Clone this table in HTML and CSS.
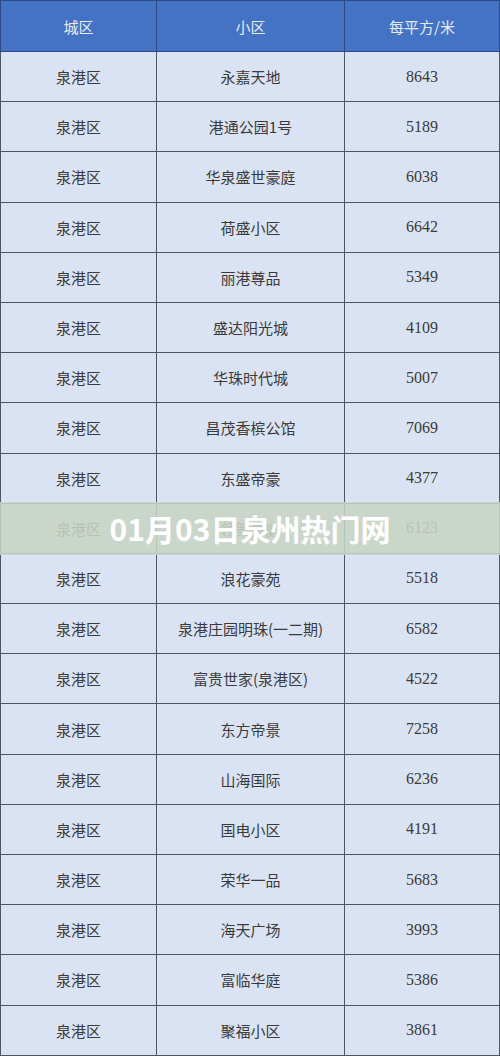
FILE: index.html
```html
<!DOCTYPE html>
<html lang="zh">
<head>
<meta charset="utf-8">
<link rel="stylesheet" href="styles.css">
</head>
<body>
<div class="page">
<table class="price-table">
<colgroup><col class="c1"><col class="c2"><col class="c3"></colgroup>
<thead>
<tr><th>城区</th><th>小区</th><th>每平方/米</th></tr>
</thead>
<tbody>
<tr><td>泉港区</td><td>永嘉天地</td><td class="num">8643</td></tr>
<tr><td>泉港区</td><td>港通公园1号</td><td class="num">5189</td></tr>
<tr><td>泉港区</td><td>华泉盛世豪庭</td><td class="num">6038</td></tr>
<tr><td>泉港区</td><td>荷盛小区</td><td class="num">6642</td></tr>
<tr><td>泉港区</td><td>丽港尊品</td><td class="num">5349</td></tr>
<tr><td>泉港区</td><td>盛达阳光城</td><td class="num">4109</td></tr>
<tr><td>泉港区</td><td>华珠时代城</td><td class="num">5007</td></tr>
<tr><td>泉港区</td><td>昌茂香槟公馆</td><td class="num">7069</td></tr>
<tr><td>泉港区</td><td>东盛帝豪</td><td class="num">4377</td></tr>
<tr><td>泉港区</td><td>领第豪庭</td><td class="num">6123</td></tr>
<tr><td>泉港区</td><td>浪花豪苑</td><td class="num">5518</td></tr>
<tr><td>泉港区</td><td>泉港庄园明珠(一二期)</td><td class="num">6582</td></tr>
<tr><td>泉港区</td><td>富贵世家(泉港区)</td><td class="num">4522</td></tr>
<tr><td>泉港区</td><td>东方帝景</td><td class="num">7258</td></tr>
<tr><td>泉港区</td><td>山海国际</td><td class="num">6236</td></tr>
<tr><td>泉港区</td><td>国电小区</td><td class="num">4191</td></tr>
<tr><td>泉港区</td><td>荣华一品</td><td class="num">5683</td></tr>
<tr><td>泉港区</td><td>海天广场</td><td class="num">3993</td></tr>
<tr><td>泉港区</td><td>富临华庭</td><td class="num">5386</td></tr>
<tr><td>泉港区</td><td>聚福小区</td><td class="num">3861</td></tr>
</tbody>
</table>
<div class="banner">01月03日泉州热门网</div>
</div>
</body>
</html>
```
FILE: styles.css
```css
html, body {
  margin: 0;
  padding: 0;
  background: #ffffff;
}
.page {
  position: relative;
  width: 500px;
  height: 1057px;
  overflow: hidden;
}
.price-table {
  width: 499px;
  border-collapse: collapse;
  table-layout: fixed;
  font-family: "Noto Sans CJK SC", "Liberation Serif", serif;
  font-size: 15px;
}
.c1 { width: 156px; }
.c2 { width: 188px; }
.c3 { width: 155px; }
.price-table th,
.price-table td {
  border: 1px solid #4d5566;
  text-align: center;
  vertical-align: middle;
  padding: 0;
}
.price-table th {
  background: #4472c4;
  color: #e6ecf8;
  font-weight: normal;
  height: 50px;
  border-color: #2f4a80;
}
.price-table td {
  background: #dae3f3;
  color: #3a3a3a;
  height: 49.2px;
}
.price-table td.num {
  font-family: "Liberation Serif", serif;
  font-size: 16px;
}
.banner {
  position: absolute;
  left: 0;
  top: 502px;
  width: 500px;
  height: 53px;
  background: rgba(200, 212, 196, 0.88);
  color: #ffffff;
  font-family: "Noto Sans CJK SC", "Noto Sans", sans-serif;
  font-weight: 700;
  font-size: 30px;
  line-height: 53px;
  text-align: center;
}
```
